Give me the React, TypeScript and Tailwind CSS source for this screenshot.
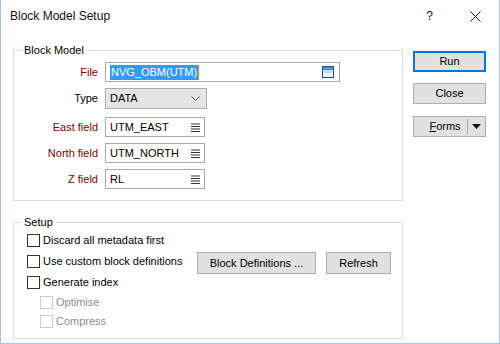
import React from "react";

const Hamburger = () => (
  <svg width="9" height="9" viewBox="0 0 9 9" className="shrink-0">
    <rect x="0" y="0.5" width="9" height="1" fill="#333" />
    <rect x="0" y="3" width="9" height="1" fill="#333" />
    <rect x="0" y="5.5" width="9" height="1" fill="#333" />
    <rect x="0" y="8" width="9" height="1" fill="#333" />
  </svg>
);

const FieldInput = ({ value }: { value: string }) => (
  <div className="w-[100px] h-[20px] border border-[#a9a9a9] bg-white flex items-center pl-[4px] pr-[4px]">
    <span className="flex-1 leading-none">{value}</span>
    <Hamburger />
  </div>
);

const Check = ({ label, disabled }: { label: string; disabled?: boolean }) => (
  <div className="flex items-center h-[13px]">
    <div
      className={
        disabled
          ? "w-[13px] h-[13px] border border-[#cccccc] bg-white shrink-0"
          : "w-[13px] h-[13px] border border-[#333333] bg-white shrink-0"
      }
    />
    <span className={disabled ? "ml-[3px] text-[#8d8d8d] leading-none" : "ml-[3px] text-black leading-none"}>
      {label}
    </span>
  </div>
);

export default function App() {
  return (
    <div className="w-[500px] h-[344px] bg-white border-x border-b border-[#a6c4e4] font-['Liberation_Sans',Arial,sans-serif] text-[11px] text-black flex flex-col overflow-hidden">
      {/* title bar */}
      <div className="h-[32px] flex items-center shrink-0">
        <span className="pl-[9px] text-[12px] text-[#111]">Block Model Setup</span>
        <span className="ml-auto text-[12px] text-[#111] mr-[37px]">?</span>
        <svg width="11" height="11" viewBox="0 0 11 11" className="mr-[18px]">
          <path d="M0.5 0.5 L10.5 10.5 M10.5 0.5 L0.5 10.5" stroke="#111" strokeWidth="1" />
        </svg>
      </div>

      {/* body */}
      <div className="flex pl-[12px]">
        {/* left column */}
        <div className="w-[390px] flex flex-col">
          {/* Block Model group */}
          <div className="relative mt-[18px] h-[151px] border border-[#dcdcdc] pt-[11px]">
            <span className="absolute left-[7px] -top-[7px] px-[3px] bg-white leading-[13px] text-[11px]">
              Block Model
            </span>
            <div className="flex items-center h-[20px]">
              <span className="w-[84px] text-right text-[#800000]">File</span>
              <div className="ml-[7px] w-[235px] h-[20px] border border-[#a9a9a9] bg-white flex items-center pl-[4px] pr-[5px]">
                <span className="bg-[#3399ff] text-white leading-[15px] px-[1px]">NVG_OBM(UTM)</span>
                <span className="w-[1px] h-[15px] bg-[#ff8000]" />
                <svg width="12" height="12" viewBox="0 0 12 12" className="ml-auto">
                  <rect x="0.5" y="0.5" width="11" height="11" fill="#eef4fc" stroke="#2b4a7f" />
                  <rect x="1" y="1" width="10" height="3" fill="#5b8fd6" />
                  <rect x="1" y="4" width="10" height="3" fill="#c9dcf4" />
                </svg>
              </div>
            </div>
            <div className="flex items-center h-[21px] mt-[6px]">
              <span className="w-[84px] text-right text-black">Type</span>
              <div className="ml-[7px] w-[102px] h-[21px] border border-[#acacac] bg-[#e5e5e5] flex items-center pl-[4px] pr-[6px]">
                <span className="flex-1">DATA</span>
                <svg width="9" height="5" viewBox="0 0 9 5">
                  <path d="M0.5 0.5 L4.5 4.5 L8.5 0.5" fill="none" stroke="#555" strokeWidth="1" />
                </svg>
              </div>
            </div>
            <div className="flex items-center h-[20px] mt-[8px]">
              <span className="w-[84px] text-right text-[#800000]">East field</span>
              <div className="ml-[7px]">
                <FieldInput value="UTM_EAST" />
              </div>
            </div>
            <div className="flex items-center h-[20px] mt-[6px]">
              <span className="w-[84px] text-right text-[#800000]">North field</span>
              <div className="ml-[7px]">
                <FieldInput value="UTM_NORTH" />
              </div>
            </div>
            <div className="flex items-center h-[20px] mt-[6px]">
              <span className="w-[84px] text-right text-[#800000]">Z field</span>
              <div className="ml-[7px]">
                <FieldInput value="RL" />
              </div>
            </div>
          </div>

          {/* Setup group */}
          <div className="relative mt-[21px] h-[117px] border border-[#dcdcdc] pl-[13px] pr-[11px] flex flex-col">
            <span className="absolute left-[7px] -top-[7px] px-[3px] bg-white leading-[13px] text-[11px]">
              Setup
            </span>
            <div className="mt-[11px]">
              <Check label="Discard all metadata first" />
            </div>
            <div className="mt-[5px] h-[22px] flex items-start">
              <div className="mt-[3px]">
                <Check label="Use custom block definitions" />
              </div>
              <div className="ml-auto flex gap-[10px]">
                <button className="w-[119px] h-[22px] bg-[#e1e1e1] border border-[#adadad] text-black">
                  Block Definitions ...
                </button>
                <button className="w-[65px] h-[22px] bg-[#e1e1e1] border border-[#adadad] text-black">
                  Refresh
                </button>
              </div>
            </div>
            <div className="mt-[2px]">
              <Check label="Generate index" />
            </div>
            <div className="mt-[7px] pl-[13px]">
              <Check label="Optimise" disabled />
            </div>
            <div className="mt-[6px] pl-[13px]">
              <Check label="Compress" disabled />
            </div>
          </div>
        </div>

        {/* right column */}
        <div className="ml-[10px] w-[73px] flex flex-col">
          <button className="mt-[19px] h-[21px] bg-[#e1e1e1] border-2 border-[#0078d7] text-black">Run</button>
          <button className="mt-[11px] h-[21px] bg-[#e1e1e1] border border-[#adadad] text-black">Close</button>
          <div className="mt-[12px] h-[21px] bg-[#e1e1e1] border border-[#adadad] flex items-center">
            <span className="ml-[9px] w-[44px] text-center">
              <span className="underline">F</span>orms
            </span>
            <span className="w-[1px] h-[15px] bg-[#adadad]" />
            <svg width="9" height="5" viewBox="0 0 9 5" className="ml-[4px]">
              <path d="M0 0 L9 0 L4.5 5 Z" fill="#111" />
            </svg>
          </div>
        </div>
      </div>
    </div>
  );
}
